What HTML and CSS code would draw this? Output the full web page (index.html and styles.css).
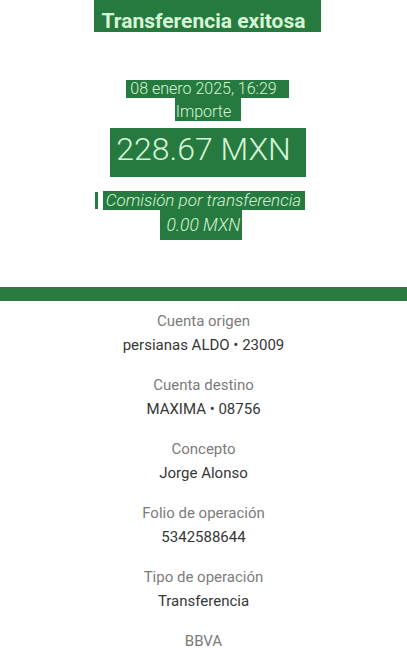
FILE: index.html
```html
<!DOCTYPE html>
<html lang="es">

<head>
    <meta charset="UTF-8">
    <meta name="viewport" content="width=device-width, initial-scale=1.0">
    <title>Transferencia exitosa</title>
    <link rel="stylesheet" href="styles.css">
</head>

<body>

    <div class="header">
        <div class="line title-line"><span class="mark title">Transferencia exitosa</span></div>

        <div class="line date-line"><span class="mark date">08 enero 2025, 16:29</span></div>
        <div class="line"><span class="mark importe">Importe</span></div>
        <div class="line"><span class="mark amount">228.67 MXN</span></div>

        <div class="line fee-line"><span class="mark fee">Comisión por transferencia</span></div>
        <div class="line"><span class="mark fee-amount">0.00 MXN</span></div>
    </div>

    <div class="bar"></div>

    <!-- Detalle de la operación -->
    <div class="details">
        <div class="item">
            <p class="label">Cuenta origen</p>
            <p class="value">persianas ALDO • 23009</p>
        </div>
        <div class="item">
            <p class="label">Cuenta destino</p>
            <p class="value">MAXIMA • 08756</p>
        </div>
        <div class="item">
            <p class="label">Concepto</p>
            <p class="value">Jorge Alonso</p>
        </div>
        <div class="item">
            <p class="label">Folio de operación</p>
            <p class="value">5342588644</p>
        </div>
        <div class="item">
            <p class="label">Tipo de operación</p>
            <p class="value">Transferencia</p>
        </div>
        <div class="item">
            <p class="label">BBVA</p>
        </div>
    </div>

</body>

</html>
```

FILE: styles.css
```css
body {
    margin: 0;
    font-family: Roboto, "Noto Sans", sans-serif;
    background-color: #ffffff;
}

.header {
    text-align: center;
}

.line {
    display: block;
}

.mark {
    display: inline-block;
    background-color: #267a3f;
    color: #d6f5d6;
}

.title {
    font-size: 21px;
    font-weight: 700;
    line-height: 22px;
    padding: 10px 16px 0 8px;
    margin-left: 8px;
}

.date-line {
    margin-top: 47px;
}

.date {
    font-size: 16px;
    font-weight: 300;
    line-height: 18px;
    padding: 0 12px 0 4px;
    margin-left: 8px;
}

.importe {
    font-size: 16px;
    font-weight: 300;
    line-height: 19px;
    padding: 4px 10px 0 1px;
    margin-left: 9px;
}

.amount {
    font-size: 32px;
    font-weight: 300;
    line-height: 38px;
    padding: 2px 15px 9px 6px;
    margin-top: 7px;
    margin-left: 9px;
}

.fee-line {
    margin-top: 14px;
}

.fee {
    position: relative;
    font-size: 17px;
    font-weight: 300;
    font-style: italic;
    line-height: 19px;
    padding: 0 4px 0 3px;
    margin-left: 1px;
}

/* small leftover patch before the fee label */
.fee::before {
    content: "";
    position: absolute;
    left: -8px;
    top: 1px;
    width: 3px;
    height: 17px;
    background-color: #267a3f;
}

.fee-amount {
    font-size: 17.5px;
    font-weight: 300;
    font-style: italic;
    line-height: 20px;
    padding: 5px 2px 5px 7px;
    margin-right: 5px;
}

.bar {
    height: 14px;
    margin-top: 47px;
    background-color: #2a7a41;
}

.details {
    padding-top: 8px;
    text-align: center;
}

.item {
    margin-bottom: 16px;
}

.label,
.value {
    margin: 0;
    font-size: 15px;
    line-height: 24px;
}

.label {
    color: #7b7b7b;
}

.value {
    color: #363636;
}
```
